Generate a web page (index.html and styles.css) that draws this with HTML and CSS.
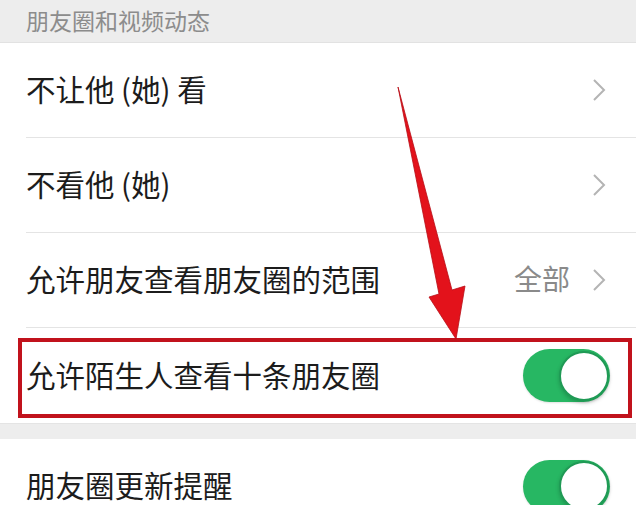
FILE: index.html
```html
<!DOCTYPE html>
<html>
<head>
    <meta charset="utf-8">
    <meta name="viewport" content="width=device-width, initial-scale=1">
    <link rel="stylesheet" href="styles.css">
</head>
<body>
    <div class="page">
        <div class="section-title">朋友圈和视频动态</div>

        <div class="group">
            <div class="row">
                <span class="row-label">不让他 (她) 看</span>
                <svg class="chevron" width="14" height="24" viewBox="0 0 14 24"><polyline points="2,2 12,12 2,22" /></svg>
            </div>
            <div class="row">
                <span class="row-label">不看他 (她)</span>
                <svg class="chevron" width="14" height="24" viewBox="0 0 14 24"><polyline points="2,2 12,12 2,22" /></svg>
            </div>
            <div class="row">
                <span class="row-label">允许朋友查看朋友圈的范围</span>
                <span class="row-value">全部</span>
                <svg class="chevron" width="14" height="24" viewBox="0 0 14 24"><polyline points="2,2 12,12 2,22" /></svg>
            </div>
            <div class="row row-last highlighted">
                <span class="row-label">允许陌生人查看十条朋友圈</span>
                <div class="switch on"><div class="knob"></div></div>
                <div class="mark-box"></div>
            </div>
        </div>

        <div class="group-gap"></div>

        <div class="group">
            <div class="row row-last">
                <span class="row-label">朋友圈更新提醒</span>
                <div class="switch on"><div class="knob"></div></div>
            </div>
        </div>

        <!-- red pointer drawn over the list -->
        <svg class="pointer" width="636" height="505" viewBox="0 0 636 505">
            <polygon points="398,87 452,290 465,286 456,339 429,297 439,294" />
        </svg>
    </div>
</body>
</html>
```

FILE: styles.css
```css
body {
    margin: 0;
    background: #ffffff;
    font-family: "Noto Sans CJK SC", "Noto Sans", sans-serif;
    overflow: hidden;
}
.page {
    position: relative;
    width: 636px;
    height: 505px;
    overflow: hidden;
}
.section-title {
    height: 42px;
    line-height: 40px;
    padding-left: 26px;
    background: #ededed;
    color: #8c8c8c;
    font-size: 23px;
    border-bottom: 1px solid #e2e2e2;
}
.group {
    background: #ffffff;
}
.row {
    position: relative;
    display: flex;
    align-items: center;
    height: 94px;
    margin-left: 26px;
    padding-right: 28px;
    border-bottom: 1px solid #e4e4e4;
}
.row-last {
    border-bottom: none;
}
.row-label {
    flex: 1;
    font-size: 29.5px;
    color: #1c1c1c;
    padding-bottom: 4px;
}
.row-value {
    font-size: 28px;
    color: #8a8a8a;
    margin-right: 22px;
    padding-bottom: 4px;
}
.chevron {
    margin-right: 2px;
}
.chevron polyline {
    fill: none;
    stroke: #b4b4b4;
    stroke-width: 2;
}
.highlighted {
    height: 95px;
}
.switch {
    width: 87px;
    height: 53px;
    border-radius: 27px;
    background: #e5e5e5;
    display: flex;
    align-items: center;
    justify-content: flex-end;
    margin-right: -2px;
    box-shadow: 0 1px 2px rgba(0,0,0,0.12);
}
.switch.on {
    background: #27b763;
}
.knob {
    width: 46px;
    height: 46px;
    border-radius: 50%;
    background: #ffffff;
    border: 2px solid #1f9a55;
    margin-right: 1px;
    box-shadow: 0 2px 4px rgba(0,0,0,0.2);
}
.mark-box {
    position: absolute;
    left: -8px;
    right: 4px;
    top: 10px;
    bottom: 5px;
    border: 4px solid #c1121c;
    pointer-events: none;
}
.group-gap {
    height: 15px;
    background: #ededed;
    border-top: 1px solid #e4e4e4;
}
.pointer {
    position: absolute;
    left: 0;
    top: 0;
    pointer-events: none;
}
.pointer polygon {
    fill: #e3121b;
    stroke: #b80d15;
    stroke-width: 0.8;
    stroke-linejoin: round;
}
```
